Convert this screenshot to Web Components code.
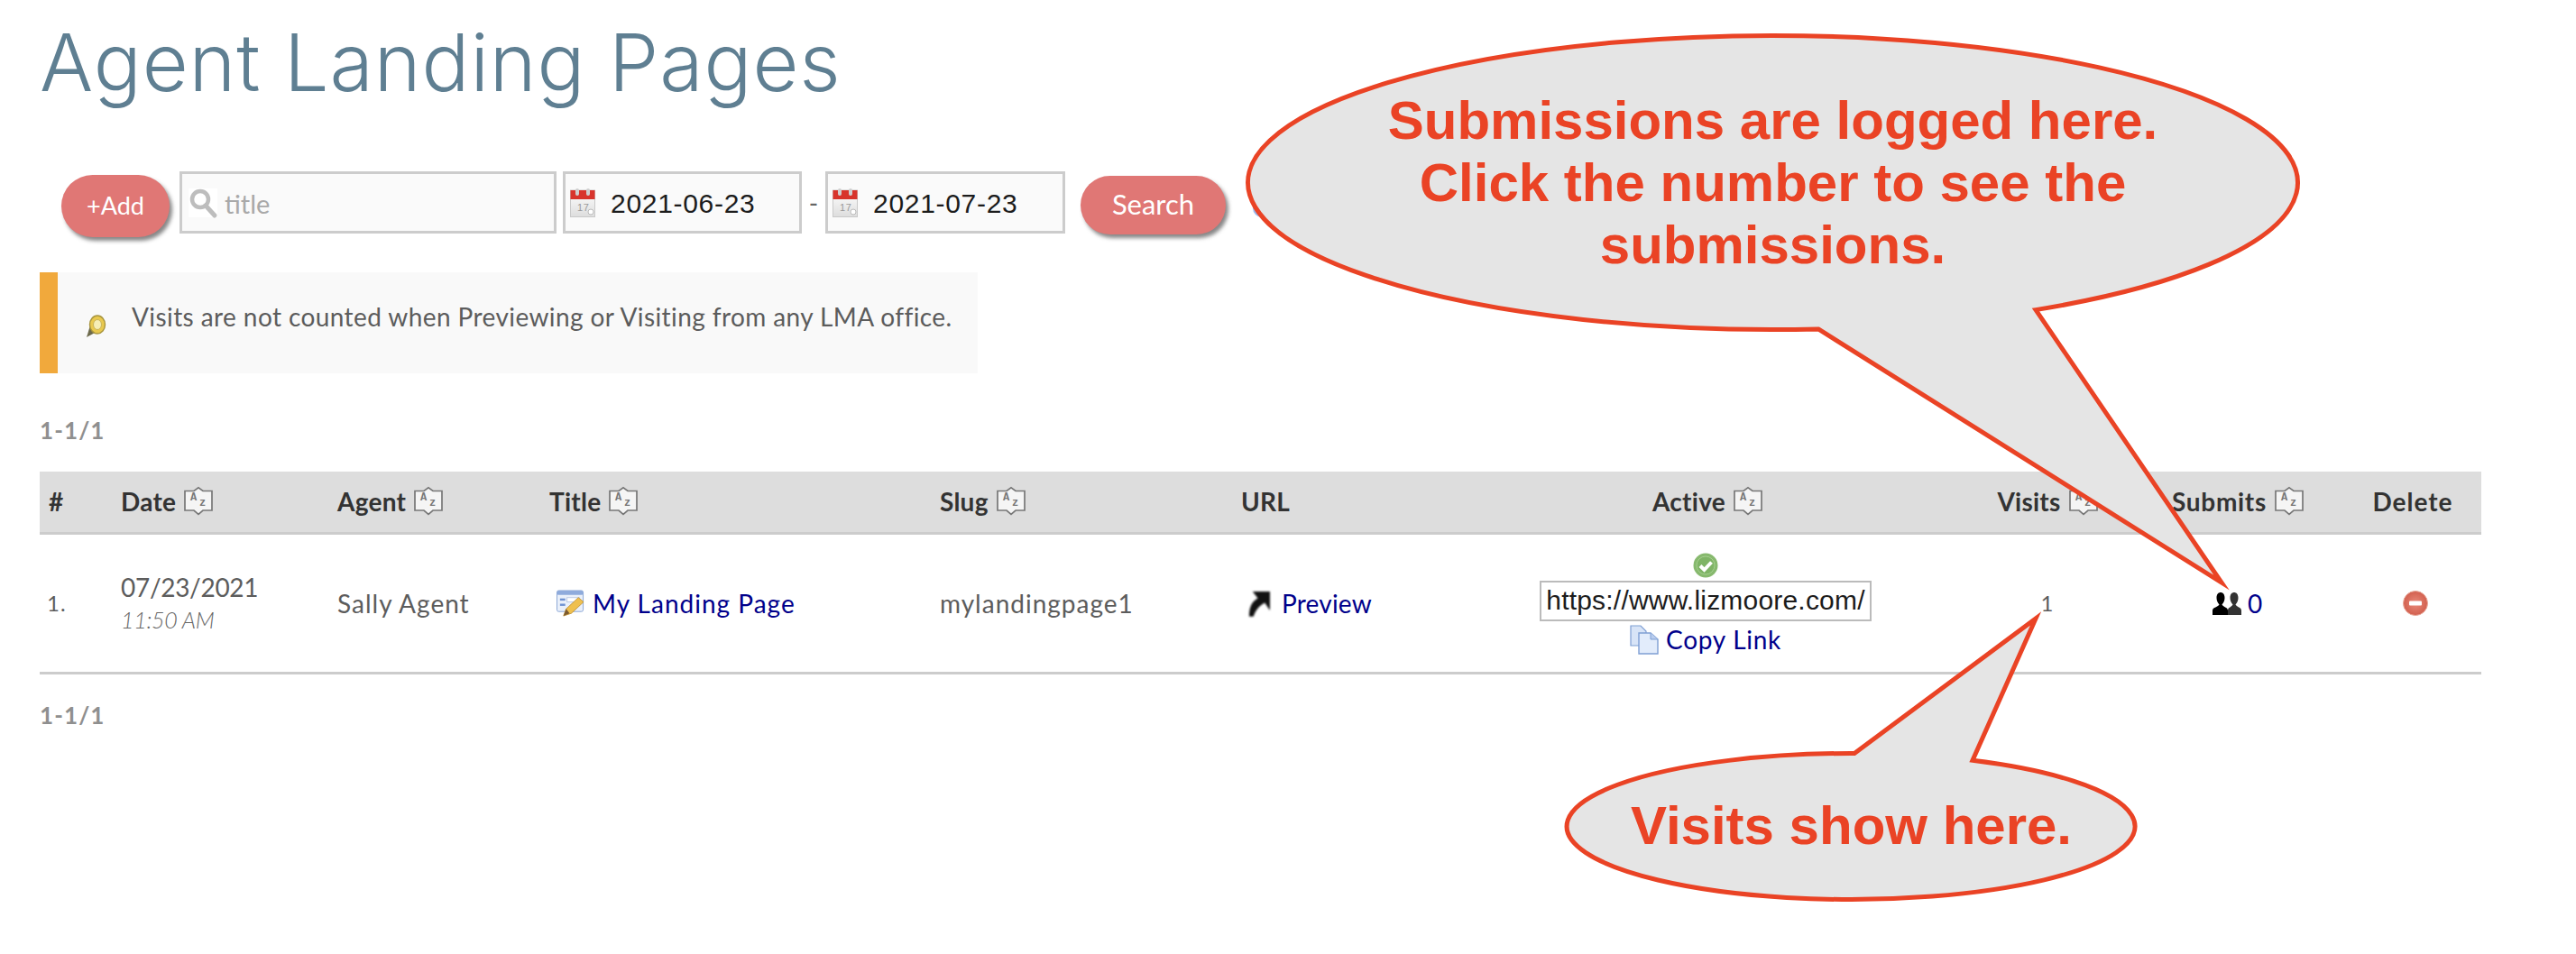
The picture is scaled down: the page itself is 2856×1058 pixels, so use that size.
<!DOCTYPE html>
<html><head><meta charset="utf-8"><title>Agent Landing Pages</title>
<style>html,body{margin:0;padding:0;background:#fff}</style></head>
<body>
<lp-page>
  <lp-heading>Agent Landing Pages</lp-heading>
  <lp-toolbar>
    <lp-button style="--w:120px;--h:69px;--mt:4px;--fs:27px">+Add</lp-button>
    <lp-field style="--w:418px;--ml:11px" icon="search" placeholder>title</lp-field>
    <lp-field style="--w:265px;--ml:7px" icon="calendar">2021-06-23</lp-field>
    <lp-dash>-</lp-dash>
    <lp-field style="--w:266px" icon="calendar">2021-07-23</lp-field>
    <lp-button style="--w:161px;--h:65px;--mt:5px;--ml:17px;--fs:31px">Search</lp-button>
    <lp-icon name="help" style="--s:22px;--ml:29px;--mt:30px"></lp-icon>
  </lp-toolbar>
  <lp-notice><lp-icon slot="icon" name="bulb" style="--s:24px"></lp-icon>Visits are not counted when Previewing or Visiting from any LMA office.</lp-notice>
  <lp-pager style="--mt:48px">1-1/1</lp-pager>
  <lp-table>
    <lp-row kind="head">
      <lp-cell>#</lp-cell>
      <lp-cell sort>Date</lp-cell>
      <lp-cell sort>Agent</lp-cell>
      <lp-cell sort>Title</lp-cell>
      <lp-cell sort>Slug</lp-cell>
      <lp-cell>URL</lp-cell>
      <lp-cell sort center style="--off:4px">Active</lp-cell>
      <lp-cell sort center>Visits</lp-cell>
      <lp-cell sort center style="--ls:.7px">Submits</lp-cell>
      <lp-cell center style="--ls:1px;--pr:5px">Delete</lp-cell>
    </lp-row>
    <lp-row kind="body">
      <lp-cell style="--pl:8px;--fz:24px">1.</lp-cell>
      <lp-cell style="--ls:-.3px"><lp-stamp date="07/23/2021" time="11:50 AM"></lp-stamp></lp-cell>
      <lp-cell>Sally Agent</lp-cell>
      <lp-cell style="--pl:18px"><lp-link icon="form" gap="9">My Landing Page</lp-link></lp-cell>
      <lp-cell>mylandingpage1</lp-cell>
      <lp-cell style="--pl:17px;--ls:.2px"><lp-link icon="arrow" gap="13">Preview</lp-link></lp-cell>
      <lp-cell center><lp-active url="https://www.lizmoore.com/"></lp-active></lp-cell>
      <lp-cell center style="--fz:24px">1</lp-cell>
      <lp-cell center><lp-link icon="people" gap="7">0</lp-link></lp-cell>
      <lp-cell center><lp-icon name="delete" style="--s:28px"></lp-icon></lp-cell>
    </lp-row>
  </lp-table>
  <lp-pager style="--mt:30px">1-1/1</lp-pager>

  <lp-callout style="--x:1340px;--y:0px;--w:1240px;--h:680px"
    d="M676 364.9 L1123 646 L917 343.6 A582 163 0 1 0 676 364.9 Z" sw="5"
    tx="625.5" ty="99" lh="69">Submissions are logged here.<br>Click the number to see the<br>submissions.</lp-callout>
  <lp-callout style="--x:1700px;--y:660px;--w:700px;--h:360px"
    d="M356 175.5 L557 26 L487 183.3 A315 81 0 1 1 356 175.5 Z" sw="5"
    tx="352.5" ty="221" lh="69">Visits show here.</lp-callout>
</lp-page>

<script>
const RALE = '"Lato","Open Sans",sans-serif';
const ICONS = {
 search:`<svg viewBox="0 0 32 32"><rect width="32" height="32" fill="#fff"/><circle cx="13" cy="12" r="9" fill="none" stroke="#bdbdbd" stroke-width="4.5"/><path d="M19 19 L29 30" stroke="#bdbdbd" stroke-width="5" stroke-linecap="round"/></svg>`,
 calendar:`<svg viewBox="0 0 28 32"><defs><linearGradient id="cg" x1="0" y1="0" x2="0" y2="1"><stop offset="0" stop-color="#fff"/><stop offset="1" stop-color="#ddd"/></linearGradient></defs><rect x="0.5" y="2" width="27" height="29.5" fill="url(#cg)" stroke="#c9c9c9"/><rect x="0.5" y="2" width="27" height="10" fill="#d8342c"/><rect x="6" y="0" width="4" height="8" rx="2" fill="#cfcfcf"/><rect x="18" y="0" width="4" height="8" rx="2" fill="#cfcfcf"/><text x="8" y="25" font-family="Liberation Sans" font-size="11" fill="#999">17</text><circle cx="23" cy="26" r="3" fill="#fff" stroke="#bbb"/></svg>`,
 sort:`<svg viewBox="0 0 32 31"><path d="M1 4.5 H11 L16 0.7 L21 4.5 H31 V26 H21 L16 30.3 L11 26 H1 Z" fill="#f5f5f5" stroke="#777" stroke-width="1.7"/><text x="7" y="15" font-family="Liberation Mono" font-size="12" font-weight="700" fill="#777">A</text><text x="17" y="21" font-family="Liberation Mono" font-size="12" font-weight="700" fill="#777">z</text></svg>`,
 bulb:`<svg viewBox="0 0 24 26"><path d="M2 25 L6 12 L13 19 Z" fill="#6d6a4c"/><ellipse cx="14" cy="11" rx="8.5" ry="10" fill="#e9c94f" stroke="#a8953e" stroke-width="1.4"/><ellipse cx="14" cy="11" rx="4.5" ry="5.5" fill="#f6eeb5" stroke="#c9b45a"/></svg>`,
 form:`<svg viewBox="0 0 32 31"><rect x="0.5" y="1" width="30" height="24" rx="2" fill="#eaf0fa" stroke="#8aa6d6"/><rect x="0.5" y="1" width="30" height="5" rx="2" fill="#8fabdc"/><rect x="4" y="10" width="6" height="2.5" fill="#6f92d2"/><rect x="4" y="16" width="6" height="2.5" fill="#6f92d2"/><rect x="12" y="9" width="14" height="5" fill="#fff" stroke="#b9c8e4"/><path d="M8 30 L11 22 L25 9 L31 14 L17 27 Z" fill="#efc04f" stroke="#b98b2c" stroke-width=".8"/><path d="M8 30 L11 22 L15 27 Z" fill="#7c5a30"/></svg>`,
 arrow:`<svg viewBox="0 0 26 32" style="filter:blur(1px)"><path d="M2 31 C2 20 5 14 12 10 L6 2 H26 V24 L20 15 C14 18 9 24 7 31 Z" fill="#111"/></svg>`,
 check:`<svg viewBox="0 0 28 28"><circle cx="14" cy="14" r="13.5" fill="#87b96e"/><circle cx="14" cy="14" r="10" fill="#7fb466" stroke="#a6d08f"/><path d="M8 14.5 L12.5 19 L20.5 10.5" fill="none" stroke="#fff" stroke-width="4"/></svg>`,
 copy:`<svg viewBox="0 0 32 33"><path d="M1 1 H12 L18 7 V23 H1 Z" fill="#d8e4f7" stroke="#7f9fd4" stroke-width="1.2"/><path d="M10 9 H23 L31 16 V32 H10 Z" fill="#e2ecfb" stroke="#7f9fd4" stroke-width="1.4"/><path d="M23 9 V16 H31" fill="#b9cdee" stroke="#7f9fd4"/></svg>`,
 people:`<svg viewBox="0 0 32 25" style="filter:blur(.4px)"><path d="M17 25 H32 V20 C32 16.5 26.5 16 25.5 13.5 C27.5 11.5 28.5 8.5 28.5 6 C28.5 2 26.5 0 24 0 C21.5 0 19.5 2 19.5 6 C19.5 8.5 20.5 11.5 22.5 13.5 C21.5 16 17 16.5 17 20 Z" fill="#333"/><path d="M0 25 H17 V20 C17 16.5 11.5 16 10.5 13.5 C12.5 11.5 13.5 8.5 13.5 6 C13.5 2 11.5 0 9 0 C6.5 0 4.5 2 4.5 6 C4.5 8.5 5.5 11.5 7.5 13.5 C6.5 16 0 16.5 0 20 Z" fill="#000"/></svg>`,
 delete:`<svg viewBox="0 0 28 28"><defs><radialGradient id="dg"><stop offset="0" stop-color="#e98a7a"/><stop offset="1" stop-color="#d2604f"/></radialGradient></defs><circle cx="14" cy="14" r="13.5" fill="url(#dg)" stroke="#e9a899"/><rect x="7" y="11.5" width="14" height="5" rx="1" fill="#fff"/></svg>`,
 help:`<svg viewBox="0 0 22 22"><circle cx="11" cy="11" r="10" fill="#9ab9ef"/></svg>`
};
function def(name, css, html, extra){
  customElements.define(name, class extends HTMLElement{
    constructor(){super();this.attachShadow({mode:'open'});}
    connectedCallback(){
      const h = typeof html==='function'?html(this):html;
      this.shadowRoot.innerHTML = `<style>${css}</style>${h}`;
      if(extra) extra(this);
    }
  });
}
def('lp-page',`:host{display:block;position:relative;width:2856px;height:1058px;overflow:hidden;padding-left:44px;box-sizing:border-box;font-family:${RALE};color:#555}`,`<slot></slot>`);
def('lp-heading',`:host{display:block;height:190px;box-sizing:border-box;padding-top:16px}
h1{margin:0;font:300 88px/107px "Inter","Lato",sans-serif;color:#5f7f92;letter-spacing:.9px}`,`<h1><slot></slot></h1>`);
def('lp-toolbar',`:host{display:flex;align-items:flex-start;padding-left:24px;height:69px}`,`<slot></slot>`);
def('lp-button',`:host{display:flex;align-items:center;justify-content:center;box-sizing:border-box;width:var(--w);height:var(--h);margin:var(--mt,0) 0 0 var(--ml,0);padding-bottom:3px;border-radius:35px;background:#e07775;color:#fff;font:400 var(--fs)/1 ${RALE};box-shadow:3px 4px 4px rgba(70,70,70,.65)}`,`<slot></slot>`);
def('lp-field',`:host{display:flex;align-items:center;box-sizing:border-box;width:var(--w);height:69px;margin-left:var(--ml,0);border:3px solid #ccc;background:#fafafa;padding-left:5px;gap:17px;font:400 30px/1 "Liberation Sans",sans-serif;color:#1c1c1c;letter-spacing:.7px}
:host([placeholder]){font:400 29px/1 ${RALE};color:#a9a9a9;gap:8px;letter-spacing:0;padding-left:7px}
span{padding-top:2px}`,
 t=>`<lp-icon name="${t.getAttribute('icon')}" style="--ml:0;--mt:0;--s:${t.getAttribute('icon')==='search'?32:28}px"></lp-icon><span><slot></slot></span>`);
def('lp-dash',`:host{display:flex;align-items:center;justify-content:center;width:26px;height:69px;font:400 28px/1 ${RALE};color:#666}`,`<slot></slot>`);
def('lp-icon',`:host{display:inline-block;flex:none;width:var(--s);margin:var(--mt,0) 0 0 var(--ml,0);line-height:0}svg{width:100%;height:auto;display:block;overflow:visible}`,t=>ICONS[t.getAttribute('name')]||'');
def('lp-notice',`:host{display:flex;align-items:center;box-sizing:border-box;width:1040px;height:112px;margin-top:43px;border-left:20px solid #f1a93c;background:#f9f9f9;padding:0 0 14px 30px;font:400 28px/1 ${RALE};color:#5c5c5c;gap:28px;letter-spacing:.41px}
.i{margin-top:22px;line-height:0}`,`<span class="i"><slot name="icon"></slot></span><span><slot></slot></span>`);
def('lp-pager',`:host{display:block;margin-top:var(--mt);font:700 26px/30px ${RALE};color:#8f8f8f;letter-spacing:1.1px}`,`<slot></slot>`);
def('lp-table',`:host{display:block;width:2707px;margin-top:31px}`,`<slot></slot>`);
def('lp-row',`:host{display:grid;grid-template-columns:80px 240px 235px 433px 334px 234px 582px 176px 246px 147px;align-items:center;box-sizing:border-box}
:host([kind=head]){height:70px;background:#ddd;border-bottom:3px solid #ccc;font:700 28px/1 ${RALE};color:#333;--ls:.25px;padding-bottom:2px}
:host([kind=body]){height:155px;border-bottom:3px solid #ccc;font:400 28px/1 ${RALE};color:#5c5c5c;--ls:1px}`,`<slot></slot>`);
def('lp-cell',`:host{display:flex;align-items:center;box-sizing:border-box;padding-left:var(--pl,10px);white-space:nowrap;letter-spacing:var(--ls,0);font-size:var(--fz,inherit)}
:host([center]){justify-content:center;padding-left:var(--off,0);padding-right:var(--pr,0)}`,t=>`<slot></slot>${t.hasAttribute('sort')?'<lp-icon name="sort" style="--s:32px;margin-left:9px"></lp-icon>':''}`);
def('lp-stamp',`:host{display:block}
div{line-height:36px}.t{font-style:italic;font-weight:300;font-size:25px;color:#666}`,t=>`<div>${t.getAttribute('date')}</div><div class="t">${t.getAttribute('time')}</div>`);
def('lp-link',`:host{display:inline-flex;align-items:center;color:#00008b;gap:var(--gap,8px)}`,t=>{
  const n=t.getAttribute('icon'),s={form:31,arrow:25,people:32,copy:32}[n];
  t.style.setProperty('--gap',t.getAttribute('gap')+'px');
  return `<lp-icon name="${n}" style="--s:${s}px"></lp-icon><span><slot></slot></span>`});
def('lp-active',`:host{display:flex;flex-direction:column;align-items:center;letter-spacing:.7px}
.u{box-sizing:border-box;width:368px;height:45px;margin:3px 0 4px;border:2px solid #bbb;background:#fff;display:flex;align-items:center;justify-content:center;font:400 30px/1 "Liberation Sans",sans-serif;color:#1c1c1c;letter-spacing:.2px}`,
 t=>`<lp-icon name="check" style="--s:28px"></lp-icon><div class="u">${t.getAttribute('url')}</div><lp-link icon="copy" gap="8">Copy Link</lp-link>`);
def('lp-callout',`:host{position:absolute;left:var(--x);top:var(--y);width:var(--w);height:var(--h);display:block;pointer-events:none}
svg{position:absolute;inset:0;width:100%;height:100%;overflow:visible}
.t{position:absolute;transform:translateX(-50%);text-align:center;white-space:nowrap;font:700 60px/69px "Liberation Sans",sans-serif;color:#ea4325}`,
 t=>`<svg viewBox="0 0 ${parseInt(t.style.getPropertyValue('--w'))} ${parseInt(t.style.getPropertyValue('--h'))}"><path d="${t.getAttribute('d')}" fill="#e5e5e5" stroke="#ea4325" stroke-width="${t.getAttribute('sw')}" stroke-miterlimit="8"/></svg><div class="t" style="left:${t.getAttribute('tx')}px;top:${t.getAttribute('ty')}px"><slot></slot></div>`);
</script>
</body></html>
